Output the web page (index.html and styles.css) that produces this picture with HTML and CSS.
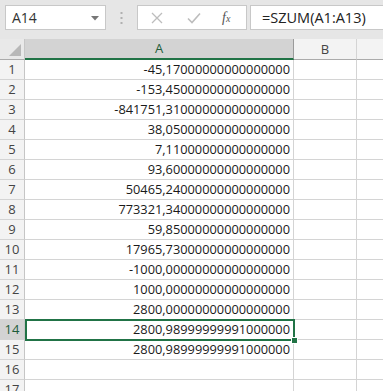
FILE: index.html
```html
<!DOCTYPE html>
<html>
<head>
<meta charset="utf-8">
<link rel="stylesheet" href="styles.css">
</head>
<body>
<div class="toolbar">
  <div class="namebox">
    <span class="nb-text">A14</span>
    <svg class="nb-arrow" width="8" height="5" viewBox="0 0 8 5"><path d="M0 0H8L4 4.5Z" fill="#777"/></svg>
  </div>
  <div class="sep">
    <svg width="3" height="12" viewBox="0 0 3 12"><rect x="0.5" y="0" width="2" height="2" fill="#b0b0b0"/><rect x="0.5" y="5" width="2" height="2" fill="#b0b0b0"/><rect x="0.5" y="10" width="2" height="2" fill="#b0b0b0"/></svg>
  </div>
  <div class="btns">
    <svg class="btn-x" width="12" height="12" viewBox="0 0 12 12"><path d="M1 1L11 11M11 1L1 11" stroke="#bdbdbd" stroke-width="1.3" fill="none"/></svg>
    <svg class="btn-ok" width="14" height="12" viewBox="0 0 14 12"><path d="M1 6.5L5 10.5L13 1.5" stroke="#bdbdbd" stroke-width="1.6" fill="none"/></svg>
    <span class="btn-fx">f<span class="fx-x">x</span></span>
  </div>
  <div class="formula">=SZUM(A1:A13)</div>
</div>
<div class="sheet">
  <div class="corner"><svg width="12" height="12" viewBox="0 0 12 12"><path d="M12 0V12H0Z" fill="#b8b8b8"/></svg></div>
  <div class="colhead sel">A</div>
  <div class="colhead">B</div>
  <div class="colhead last"></div>

  <div class="rowhead">1</div><div class="cell num">-45,17000000000000000</div><div class="cell"></div><div class="cell last"></div>
  <div class="rowhead">2</div><div class="cell num">-153,45000000000000000</div><div class="cell"></div><div class="cell last"></div>
  <div class="rowhead">3</div><div class="cell num">-841751,31000000000000000</div><div class="cell"></div><div class="cell last"></div>
  <div class="rowhead">4</div><div class="cell num">38,05000000000000000</div><div class="cell"></div><div class="cell last"></div>
  <div class="rowhead">5</div><div class="cell num">7,11000000000000000</div><div class="cell"></div><div class="cell last"></div>
  <div class="rowhead">6</div><div class="cell num">93,60000000000000000</div><div class="cell"></div><div class="cell last"></div>
  <div class="rowhead">7</div><div class="cell num">50465,24000000000000000</div><div class="cell"></div><div class="cell last"></div>
  <div class="rowhead">8</div><div class="cell num">773321,34000000000000000</div><div class="cell"></div><div class="cell last"></div>
  <div class="rowhead">9</div><div class="cell num">59,85000000000000000</div><div class="cell"></div><div class="cell last"></div>
  <div class="rowhead">10</div><div class="cell num">17965,73000000000000000</div><div class="cell"></div><div class="cell last"></div>
  <div class="rowhead">11</div><div class="cell num">-1000,00000000000000000</div><div class="cell"></div><div class="cell last"></div>
  <div class="rowhead">12</div><div class="cell num">1000,00000000000000000</div><div class="cell"></div><div class="cell last"></div>
  <div class="rowhead">13</div><div class="cell num">2800,00000000000000000</div><div class="cell"></div><div class="cell last"></div>
  <div class="rowhead selrow">14</div><div class="cell num active">2800,98999999991000000</div><div class="cell"></div><div class="cell last"></div>
  <div class="rowhead">15</div><div class="cell num">2800,98999999991000000</div><div class="cell"></div><div class="cell last"></div>
  <div class="rowhead">16</div><div class="cell num"></div><div class="cell"></div><div class="cell last"></div>
  <div class="rowhead">17</div><div class="cell num"></div><div class="cell"></div><div class="cell last"></div>
</div>
</body>
</html>
```

FILE: styles.css
```css
html, body {
  margin: 0;
  padding: 0;
  background: #ffffff;
  overflow: hidden;
  width: 383px;
  height: 391px;
  font-family: "Open Sans", "Liberation Sans", sans-serif;
}

.toolbar {
  height: 39px;
  background: #e6e6e6;
  display: flex;
  align-items: flex-start;
  padding: 5px 0 0 5px;
  box-sizing: border-box;
}

.namebox {
  width: 101px;
  height: 25px;
  box-sizing: border-box;
  background: #fff;
  border: 1px solid #c8c8c8;
  display: flex;
  align-items: center;
  justify-content: space-between;
  padding: 0 6px 0 6px;
}

.nb-text {
  font-size: 14px;
  color: #333;
}

.nb-arrow {
  margin-top: 1px;
}

.sep {
  width: 31px;
  height: 25px;
  display: flex;
  align-items: center;
  justify-content: center;
}

.btns {
  width: 110px;
  height: 25px;
  box-sizing: border-box;
  background: #fff;
  border: 1px solid #c8c8c8;
  display: flex;
  align-items: center;
  padding-left: 13px;
}

.btn-x {
  margin-right: 24px;
}

.btn-ok {
  margin-right: 21px;
}

.btn-fx {
  font-family: "Liberation Serif", "DejaVu Serif", serif;
  font-style: italic;
  font-size: 14px;
  color: #555;
  line-height: 1;
}

.fx-x {
  font-size: 10px;
}

.formula {
  flex: 1;
  height: 25px;
  box-sizing: border-box;
  margin-left: 3px;
  background: #fff;
  border: 1px solid #c8c8c8;
  border-right: none;
  font-size: 14.5px;
  color: #222;
  line-height: 23px;
  padding-left: 11px;
}

.sheet {
  display: grid;
  grid-template-columns: 25px 269px 63px 1fr;
  grid-template-rows: 21px;
  grid-auto-rows: 20px;
}

.corner {
  background: #e9e9e9;
  border-right: 1px solid #c6c6c6;
  border-bottom: 1px solid #ababab;
  box-sizing: border-box;
  display: flex;
  align-items: flex-end;
  justify-content: flex-end;
  padding: 0 3px 3px 0;
}

.colhead {
  background: #f3f3f3;
  border-right: 1px solid #d4d4d4;
  border-bottom: 1px solid #ababab;
  box-sizing: border-box;
  font-size: 13px;
  color: #444;
  text-align: center;
  line-height: 20px;
}

.colhead.sel {
  background: #d3d3d3;
  color: #1e5d3a;
  border-right-color: #9b9b9b;
  border-bottom: 2px solid #217346;
  line-height: 19px;
}

.colhead.last {
  border-right: none;
}

.rowhead {
  background: #f3f3f3;
  border-right: 1px solid #c6c6c6;
  border-bottom: 1px solid #d4d4d4;
  box-sizing: border-box;
  font-size: 13px;
  color: #444;
  text-align: center;
  line-height: 19px;
}

.rowhead.selrow {
  background: #d3d3d3;
  color: #1e5d3a;
}

.cell {
  border-right: 1px solid #d4d4d4;
  border-bottom: 1px solid #d4d4d4;
  box-sizing: border-box;
  font-size: 12.8px;
  color: #1a1a1a;
  line-height: 19px;
}

.cell.last {
  border-right: none;
}

.num {
  text-align: right;
  padding-right: 3px;
}

.active {
  position: relative;
}

.active::before {
  content: "";
  position: absolute;
  left: 0;
  top: -1px;
  right: -2px;
  bottom: -2px;
  border: 2px solid #217346;
}

.active::after {
  content: "";
  position: absolute;
  right: -5px;
  bottom: -5px;
  width: 5px;
  height: 5px;
  background: #217346;
  border: 1px solid #fff;
}
```
